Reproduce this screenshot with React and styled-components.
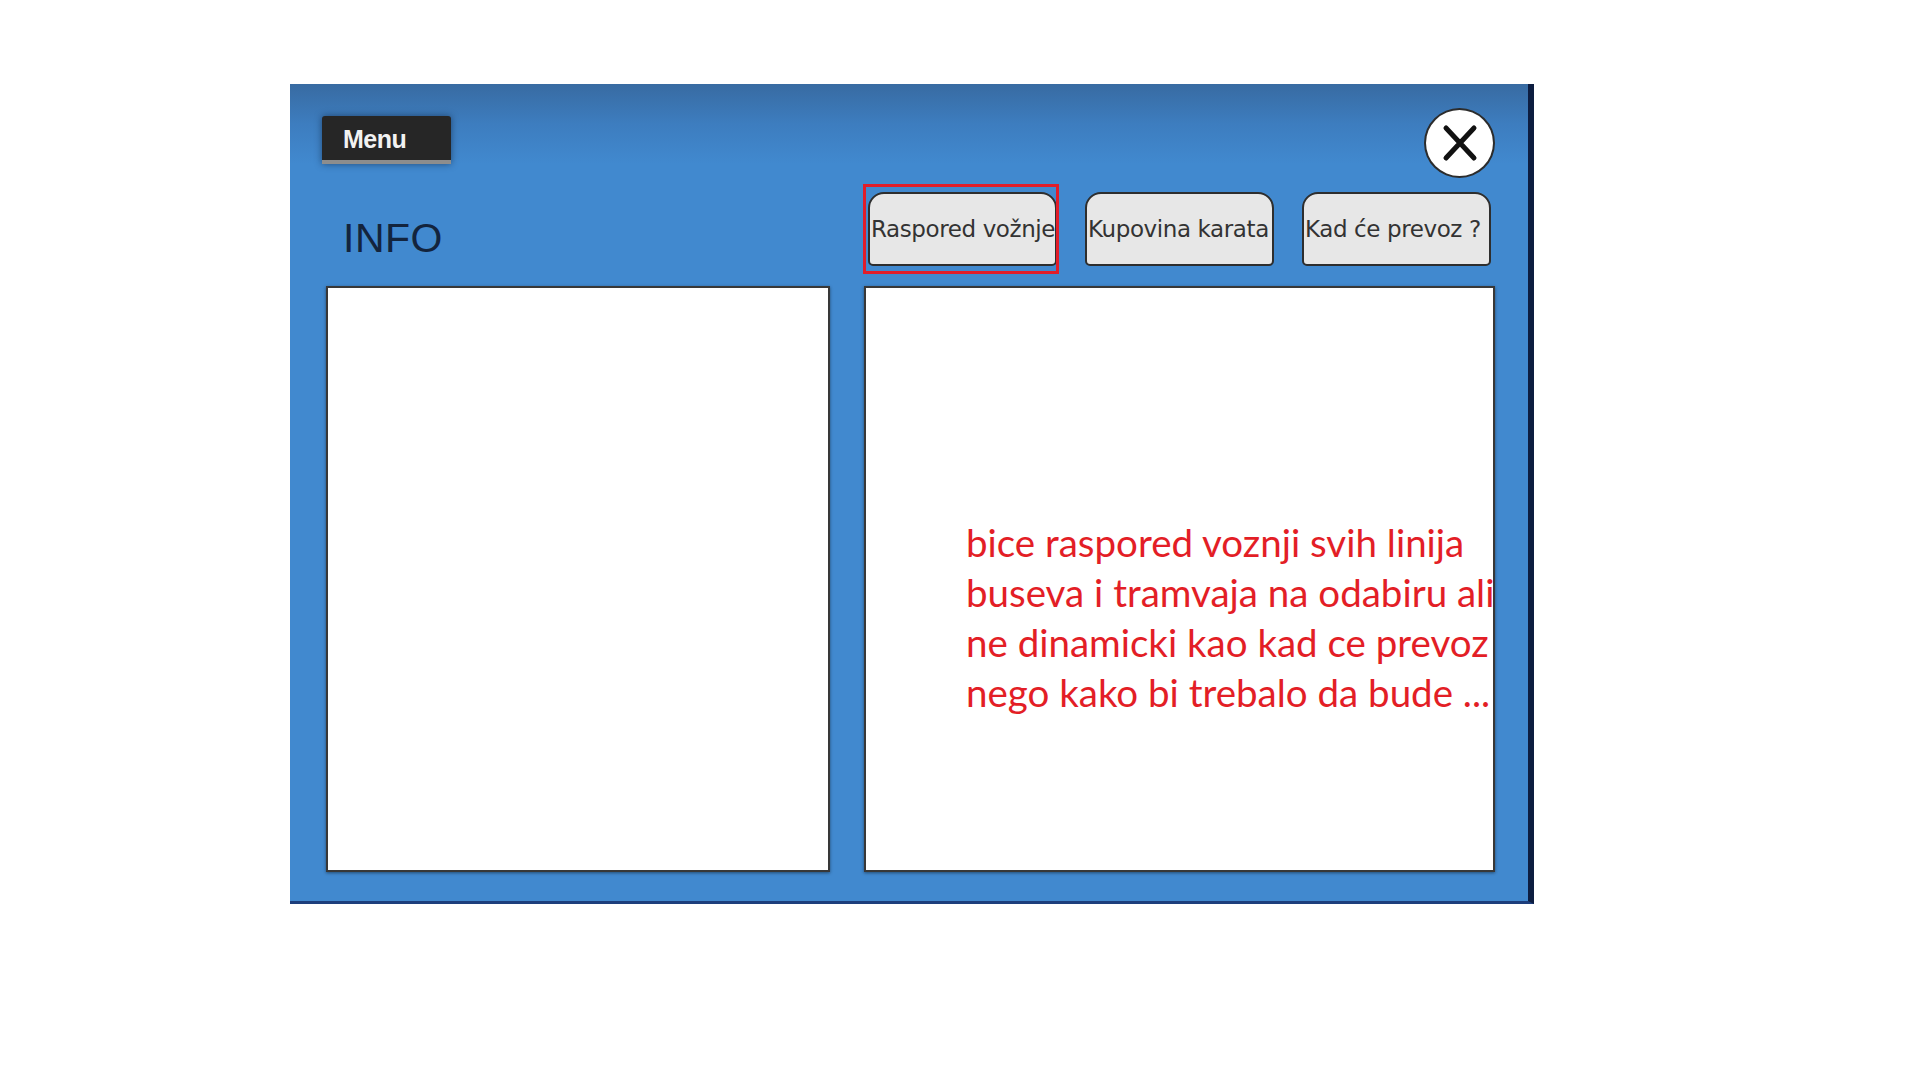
import styled, { createGlobalStyle } from "styled-components";

const GlobalStyle = createGlobalStyle`
  html, body {
    margin: 0;
    padding: 0;
    background: #ffffff;
  }
  body {
    font-family: "Liberation Sans", Arial, sans-serif;
  }
`;

const Page = styled.div`
  width: 1920px;
  height: 1080px;
  padding: 84px 0 0 290px;
  box-sizing: border-box;
  background: #ffffff;
`;

const Window = styled.div`
  width: 1244px;
  height: 820px;
  box-sizing: border-box;
  background: linear-gradient(180deg, #386ba2 0px, #3d7dbf 40px, #4189cf 80px, #4189cf 100%);
  border-right: 6px solid #0d1d40;
  border-bottom: 3px solid #1d3e7c;
  display: grid;
  grid-template-columns: 504px 631px;
  grid-template-rows: 202px 586px;
  column-gap: 34px;
  padding: 0 27px 0 36px;
`;

const LeftHead = styled.div`
  display: flex;
  flex-direction: column;
  align-items: flex-start;
`;

const MenuButton = styled.div`
  margin: 32px 0 0 -4px;
  width: 129px;
  height: 44px;
  box-sizing: content-box;
  background: #262626;
  border-bottom: 4px solid #8d8d8d;
  border-radius: 3px 3px 0 0;
  box-shadow: 0 0 7px rgba(10, 25, 50, 0.55);
  color: #f2f2f2;
  font-size: 25px;
  font-weight: bold;
  line-height: 46px;
  text-indent: 21px;
  letter-spacing: -0.5px;
`;

const Title = styled.h1`
  margin: 54px 0 0 17px;
  font-size: 41px;
  line-height: 41px;
  font-weight: normal;
  color: #13243d;
  letter-spacing: 0.5px;
`;

const RightHead = styled.div`
  display: flex;
  flex-direction: column;
  align-items: flex-end;
`;

const CloseButton = styled.div`
  margin-top: 24px;
  width: 71px;
  height: 70px;
  box-sizing: border-box;
  border-radius: 50%;
  background: #ffffff;
  border: 2px solid #2c2c2c;
  display: flex;
  align-items: center;
  justify-content: center;
`;

const Tabs = styled.div`
  margin-top: 14px;
  align-self: stretch;
  display: flex;
  gap: 28px;
  padding-left: 4px;
`;

const Tab = styled.div`
  position: relative;
  width: 189px;
  height: 74px;
  box-sizing: border-box;
  background: #e7e7e7;
  border: 2px solid #2e2e2e;
  border-radius: 16px 16px 5px 5px;
  display: flex;
  align-items: center;
  padding-left: 1px;
  font-family: "DejaVu Sans", sans-serif;
  font-size: 23px;
  letter-spacing: -0.4px;
  color: #333333;
  white-space: nowrap;

  span {
    display: block;
    overflow: hidden;
    width: 100%;
  }

  &::after {
    content: "";
    display: ${({ $active }) => ($active ? "block" : "none")};
    position: absolute;
    top: -10px;
    bottom: -10px;
    left: -7px;
    right: -4px;
    border: 3px solid #e11d2a;
  }
`;

const Sheet = styled.div`
  background: #ffffff;
  border: 2px solid #383838;
  box-shadow: 0 1px 3px rgba(0, 0, 0, 0.45);
  box-sizing: border-box;
`;

const NoteSheet = styled(Sheet)`
  padding: 229px 0 0 100px;
`;

const Note = styled.p`
  margin: 0;
  font-family: Lato, "Open Sans", sans-serif;
  font-size: 38.5px;
  line-height: 50px;
  color: #e31e26;
  white-space: nowrap;
`;

const lines = [
  "bice raspored voznji svih linija",
  "buseva i tramvaja na odabiru ali",
  "ne dinamicki kao kad ce prevoz",
  "nego kako bi trebalo da bude ...",
];

export default function App() {
  return (
    <>
      <GlobalStyle />
      <Page>
        <Window>
          <LeftHead>
            <MenuButton>Menu</MenuButton>
            <Title>INFO</Title>
          </LeftHead>
          <RightHead>
            <CloseButton>
              <svg width="40" height="40" viewBox="0 0 40 40">
                <path
                  d="M6 5 L34 35 M34 5 L6 35"
                  stroke="#111"
                  strokeWidth="5"
                  strokeLinecap="round"
                  fill="none"
                />
              </svg>
            </CloseButton>
            <Tabs>
              <Tab $active>
                <span>Raspored vožnje</span>
              </Tab>
              <Tab>
                <span>Kupovina karata</span>
              </Tab>
              <Tab>
                <span>Kad će prevoz ?</span>
              </Tab>
            </Tabs>
          </RightHead>
          <Sheet />
          <NoteSheet>
            {lines.map((l) => (
              <Note key={l}>{l}</Note>
            ))}
          </NoteSheet>
        </Window>
      </Page>
    </>
  );
}
